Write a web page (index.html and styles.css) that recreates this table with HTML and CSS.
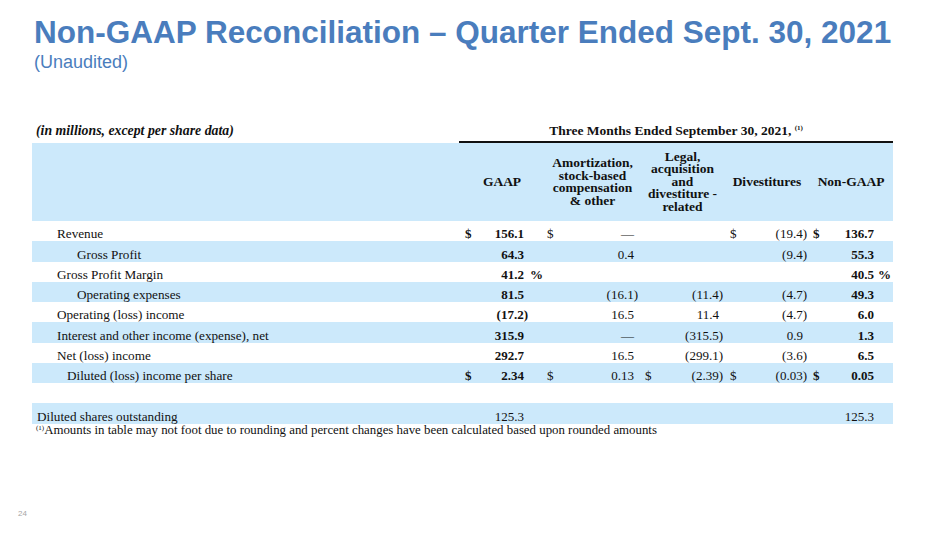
FILE: index.html
```html
<!DOCTYPE html>
<html>
<head>
<meta charset="utf-8">
<link rel="stylesheet" href="styles.css">
</head>
<body>
<div class="slide">
  <h1 class="title">Non-GAAP Reconciliation – Quarter Ended Sept. 30, 2021</h1>
  <div class="subtitle">(Unaudited)</div>

  <table class="recon">
    <colgroup>
      <col class="c-label"><col class="c-gs"><col class="c-gv"><col class="c-gp">
      <col class="c-as"><col class="c-av"><col class="c-ls"><col class="c-lv">
      <col class="c-ds"><col class="c-dv"><col class="c-ns"><col class="c-nv"><col class="c-np">
    </colgroup>
    <tr class="top">
      <td class="units">(in millions, except per share data)</td>
      <td class="period" colspan="12">Three Months Ended September 30, 2021, <sup>(1)</sup></td>
    </tr>
    <tr class="head band">
      <td></td>
      <th colspan="3">GAAP</th>
      <th colspan="2">Amortization,<br>stock-based<br>compensation<br>&amp; other</th>
      <th colspan="2">Legal,<br>acquisition<br>and<br>divestiture -<br>related</th>
      <th colspan="2">Divestitures</th>
      <th colspan="3">Non-GAAP</th>
    </tr>
    <tr class="row">
      <td class="lbl i1">Revenue</td>
      <td class="cur gs b">$</td><td class="val gv b">156.1</td><td class="pc gp"></td>
      <td class="cur as">$</td><td class="val av">—</td>
      <td class="cur ls"></td><td class="val lv"></td>
      <td class="cur ds">$</td><td class="val dv">(19.4<span class="rp">)</span></td>
      <td class="cur ns b">$</td><td class="val nv b">136.7</td><td class="pc np"></td>
    </tr>
    <tr class="row band">
      <td class="lbl i2">Gross Profit</td>
      <td class="cur gs"></td><td class="val gv b">64.3</td><td class="pc gp"></td>
      <td class="cur as"></td><td class="val av">0.4</td>
      <td class="cur ls"></td><td class="val lv"></td>
      <td class="cur ds"></td><td class="val dv">(9.4<span class="rp">)</span></td>
      <td class="cur ns"></td><td class="val nv b">55.3</td><td class="pc np"></td>
    </tr>
    <tr class="row">
      <td class="lbl i1">Gross Profit Margin</td>
      <td class="cur gs"></td><td class="val gv b">41.2</td><td class="pc gp b">%</td>
      <td class="cur as"></td><td class="val av"></td>
      <td class="cur ls"></td><td class="val lv"></td>
      <td class="cur ds"></td><td class="val dv"></td>
      <td class="cur ns"></td><td class="val nv b">40.5</td><td class="pc np b">%</td>
    </tr>
    <tr class="row band">
      <td class="lbl i2">Operating expenses</td>
      <td class="cur gs"></td><td class="val gv b">81.5</td><td class="pc gp"></td>
      <td class="cur as"></td><td class="val av">(16.1<span class="rp">)</span></td>
      <td class="cur ls"></td><td class="val lv">(11.4<span class="rp">)</span></td>
      <td class="cur ds"></td><td class="val dv">(4.7<span class="rp">)</span></td>
      <td class="cur ns"></td><td class="val nv b">49.3</td><td class="pc np"></td>
    </tr>
    <tr class="row">
      <td class="lbl i1">Operating (loss) income</td>
      <td class="cur gs"></td><td class="val gv b">(17.2<span class="rp">)</span></td><td class="pc gp"></td>
      <td class="cur as"></td><td class="val av">16.5</td>
      <td class="cur ls"></td><td class="val lv">11.4</td>
      <td class="cur ds"></td><td class="val dv">(4.7<span class="rp">)</span></td>
      <td class="cur ns"></td><td class="val nv b">6.0</td><td class="pc np"></td>
    </tr>
    <tr class="row band">
      <td class="lbl i1">Interest and other income (expense), net</td>
      <td class="cur gs"></td><td class="val gv b">315.9</td><td class="pc gp"></td>
      <td class="cur as"></td><td class="val av">—</td>
      <td class="cur ls"></td><td class="val lv">(315.5<span class="rp">)</span></td>
      <td class="cur ds"></td><td class="val dv">0.9</td>
      <td class="cur ns"></td><td class="val nv b">1.3</td><td class="pc np"></td>
    </tr>
    <tr class="row">
      <td class="lbl i1">Net (loss) income</td>
      <td class="cur gs"></td><td class="val gv b">292.7</td><td class="pc gp"></td>
      <td class="cur as"></td><td class="val av">16.5</td>
      <td class="cur ls"></td><td class="val lv">(299.1<span class="rp">)</span></td>
      <td class="cur ds"></td><td class="val dv">(3.6<span class="rp">)</span></td>
      <td class="cur ns"></td><td class="val nv b">6.5</td><td class="pc np"></td>
    </tr>
    <tr class="row band">
      <td class="lbl i3">Diluted (loss) income per share</td>
      <td class="cur gs b">$</td><td class="val gv b">2.34</td><td class="pc gp"></td>
      <td class="cur as">$</td><td class="val av">0.13</td>
      <td class="cur ls">$</td><td class="val lv">(2.39<span class="rp">)</span></td>
      <td class="cur ds">$</td><td class="val dv">(0.03<span class="rp">)</span></td>
      <td class="cur ns b">$</td><td class="val nv b">0.05</td><td class="pc np"></td>
    </tr>
    <tr class="row">
      <td colspan="13"></td>
    </tr>
    <tr class="row band">
      <td class="lbl i0">Diluted shares outstanding</td>
      <td class="cur gs"></td><td class="val gv">125.3</td><td class="pc gp"></td>
      <td class="cur as"></td><td class="val av"></td>
      <td class="cur ls"></td><td class="val lv"></td>
      <td class="cur ds"></td><td class="val dv"></td>
      <td class="cur ns"></td><td class="val nv">125.3</td><td class="pc np"></td>
    </tr>
  </table>
  <p class="footnote"><sup>(1)</sup>Amounts in table may not foot due to rounding and percent changes have been calculated based upon rounded amounts</p>
  <div class="pagenum">24</div>
</div>
</body>
</html>
```

FILE: styles.css
```css
html, body {
  margin: 0;
  padding: 0;
  background: #ffffff;
}

.slide {
  width: 950px;
  height: 535px;
  overflow: hidden;
  padding-top: 14px;
  box-sizing: border-box;
}

.title {
  margin: 0 0 0 34px;
  font-family: "Liberation Sans", Arial, sans-serif;
  font-weight: bold;
  font-size: 31.5px;
  line-height: 36px;
  color: #4a7dbd;
  white-space: nowrap;
}

.subtitle {
  margin: 2px 0 0 34px;
  font-family: "Liberation Sans", Arial, sans-serif;
  font-size: 18px;
  line-height: 20px;
  color: #4a7dbd;
}

.recon {
  margin: 50px 0 0 32px;
  width: 861px;
  table-layout: fixed;
  border-collapse: separate;
  border-spacing: 0;
  font-family: "Liberation Serif", "Times New Roman", serif;
  font-size: 13px;
  color: #111;
}

.c-label { width: 427px; }
.c-gs { width: 16px; }
.c-gv { width: 51px; }
.c-gp { width: 19px; }
.c-as { width: 10px; }
.c-av { width: 85px; }
.c-ls { width: 15px; }
.c-lv { width: 70px; }
.c-ds { width: 15px; }
.c-dv { width: 69px; }
.c-ns { width: 11px; }
.c-nv { width: 56px; }
.c-np { width: 17px; }

.recon td, .recon th {
  padding: 0;
  white-space: nowrap;
}

.band { background: #cce9fb; }

.top td {
  height: 21px;
  vertical-align: bottom;
  padding-bottom: 5px;
  line-height: 14px;
  box-sizing: border-box;
}

.units {
  font-style: italic;
  font-weight: bold;
  font-size: 13.8px;
  padding-left: 4px !important;
}

.period {
  text-align: center;
  font-weight: bold;
  font-size: 13.5px;
  border-bottom: 2px solid #111;
  padding-bottom: 3px !important;
}

sup {
  font-size: 7px;
  vertical-align: 5px;
  line-height: 0;
}

.head th {
  height: 78px;
  font-weight: bold;
  font-size: 13.5px;
  text-align: center;
  vertical-align: middle;
  line-height: 12.5px;
}

.row td {
  height: 20.25px;
  vertical-align: bottom;
  line-height: 14px;
  box-sizing: border-box;
}

.lbl { font-size: 13.2px; }
.lbl.i0 { padding-left: 5px; }
.lbl.i1 { padding-left: 25px; }
.lbl.i2 { padding-left: 45px; }
.lbl.i3 { padding-left: 35px; }

.b { font-weight: bold; }

.val { text-align: right; }
.cur { text-align: left; }

.cur.gs { padding-left: 6px; }
.cur.as { padding-left: 2px; }
.cur.ls { padding-left: 5px; }
.cur.ds { padding-left: 5px; }
.cur.ns { padding-left: 4px; }

.val.gv { padding-right: 2px; }
.val.av { padding-right: 6px; }
.val.lv { padding-right: 6px; }
.val.dv { padding-right: 6px; }
.val.nv { padding-right: 2px; }

.pc.gp { padding-left: 4px; }
.pc.np { padding-left: 2px; }

.rp { margin-right: -4px; }

.footnote {
  margin: -1px 0 0 36px;
  font-family: "Liberation Serif", "Times New Roman", serif;
  font-size: 12.85px;
  line-height: 14px;
  color: #111;
  white-space: nowrap;
}

.footnote sup {
  vertical-align: 4px;
}

.pagenum {
  margin: 72px 0 0 18px;
  font-family: "Liberation Sans", Arial, sans-serif;
  font-size: 8px;
  line-height: 10px;
  color: #a6a6a6;
}
```
